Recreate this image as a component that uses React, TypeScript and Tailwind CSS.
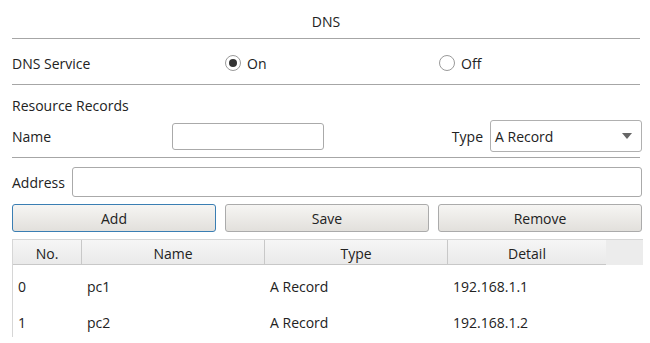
import { useState } from 'react';

const rows = [
  { no: '0', name: 'pc1', type: 'A Record', detail: '192.168.1.1' },
  { no: '1', name: 'pc2', type: 'A Record', detail: '192.168.1.2' },
];

function Radio({ checked, label }: { checked: boolean; label: string }) {
  return (
    <label className="flex items-center gap-[6px]">
      <span className="w-[16px] h-[16px] rounded-full border border-[#9a9a9a] bg-white flex items-center justify-center">
        {checked && <span className="w-[8px] h-[8px] rounded-full bg-[#333]" />}
      </span>
      <span className="pt-[2px]">{label}</span>
    </label>
  );
}

export default function App() {
  const [service] = useState(true);

  return (
    <div className="w-[650px] h-[343px] overflow-hidden bg-white text-[14px] text-[#222] font-['Open_Sans',sans-serif] leading-none">
      <div className="h-[39px] flex items-center justify-center border-b border-[#a6a6a6] mx-[12px] mr-[10px] pt-[6px]">
        DNS
      </div>

      <div className="h-[46px] flex items-center mx-[12px] mr-[10px] border-b border-[#a6a6a6] pt-[3px]">
        <span className="w-[213px] pt-[2px]">DNS Service</span>
        <div className="w-[214px]">
          <Radio checked={service} label="On" />
        </div>
        <Radio checked={!service} label="Off" />
      </div>

      <div className="mx-[12px] mr-[10px] border-b border-[#a6a6a6]">
        <div className="h-[33px] flex items-end pb-[5px]">Resource Records</div>
        <div className="h-[39px] flex items-center pb-[3px]">
          <span className="w-[160px] pt-[2px]">Name</span>
          <div className="w-[152px] h-[27px] border border-[#aaa] rounded-[3px]" />
          <span className="ml-auto mr-[7px] pt-[2px]">Type</span>
          <div className="w-[152px] h-[32px] border border-[#b0b0b0] rounded-[3px] flex items-center px-[4px] justify-between mr-[-2px]">
            <span className="pt-[2px]">A Record</span>
            <svg width="10" height="6" viewBox="0 0 10 6" className="mr-[5px]">
              <path d="M0 0h10L5 6z" fill="#666" />
            </svg>
          </div>
        </div>
      </div>

      <div className="flex items-center mx-[12px] mr-[8px] mt-[9px] h-[30px]">
        <span className="w-[60px] pt-[2px]">Address</span>
        <div className="flex-1 h-[30px] border border-[#aaa] rounded-[3px]" />
      </div>

      <div className="grid grid-cols-3 gap-[9px] mx-[12px] mr-[8px] mt-[7px]">
        <button className="h-[28px] pt-[2px] rounded-[3px] border border-[#3a7eb3] bg-gradient-to-b from-[#f6f5f3] to-[#e2e0dc]">Add</button>
        <button className="h-[28px] pt-[2px] rounded-[3px] border border-[#ababab] bg-gradient-to-b from-[#f6f5f3] to-[#e2e0dc]">Save</button>
        <button className="h-[28px] pt-[2px] rounded-[3px] border border-[#ababab] bg-gradient-to-b from-[#f6f5f3] to-[#e2e0dc]">Remove</button>
      </div>

      <div className="mx-[12px] mr-[7px] mt-[7px] border-l border-t border-[#d6d6d6]">
        <div className="flex h-[25px] bg-[#efefef]">
          <div className="w-[69px] pt-[3px] flex items-center justify-center border-r border-b border-[#c8c8c8] bg-gradient-to-b from-[#f6f6f6] to-[#eaeaea]">No.</div>
          <div className="w-[183px] pt-[3px] flex items-center justify-center border-r border-b border-[#c8c8c8] bg-gradient-to-b from-[#f6f6f6] to-[#eaeaea]">Name</div>
          <div className="w-[183px] pt-[3px] flex items-center justify-center border-r border-b border-[#c8c8c8] bg-gradient-to-b from-[#f6f6f6] to-[#eaeaea]">Type</div>
          <div className="w-[158px] pt-[3px] flex items-center justify-center border-b border-[#c8c8c8] bg-gradient-to-b from-[#f6f6f6] to-[#eaeaea]">Detail</div>
          <div className="flex-1 bg-[#ececec]" />
        </div>
        {rows.map((r) => (
          <div key={r.no} className="flex h-[36px] items-center pt-[7px]">
            <span className="w-[69px] pl-[5px]">{r.no}</span>
            <span className="w-[183px] pl-[5px]">{r.name}</span>
            <span className="w-[183px] pl-[5px]">{r.type}</span>
            <span className="pl-[5px]">{r.detail}</span>
          </div>
        ))}
      </div>
    </div>
  );
}
